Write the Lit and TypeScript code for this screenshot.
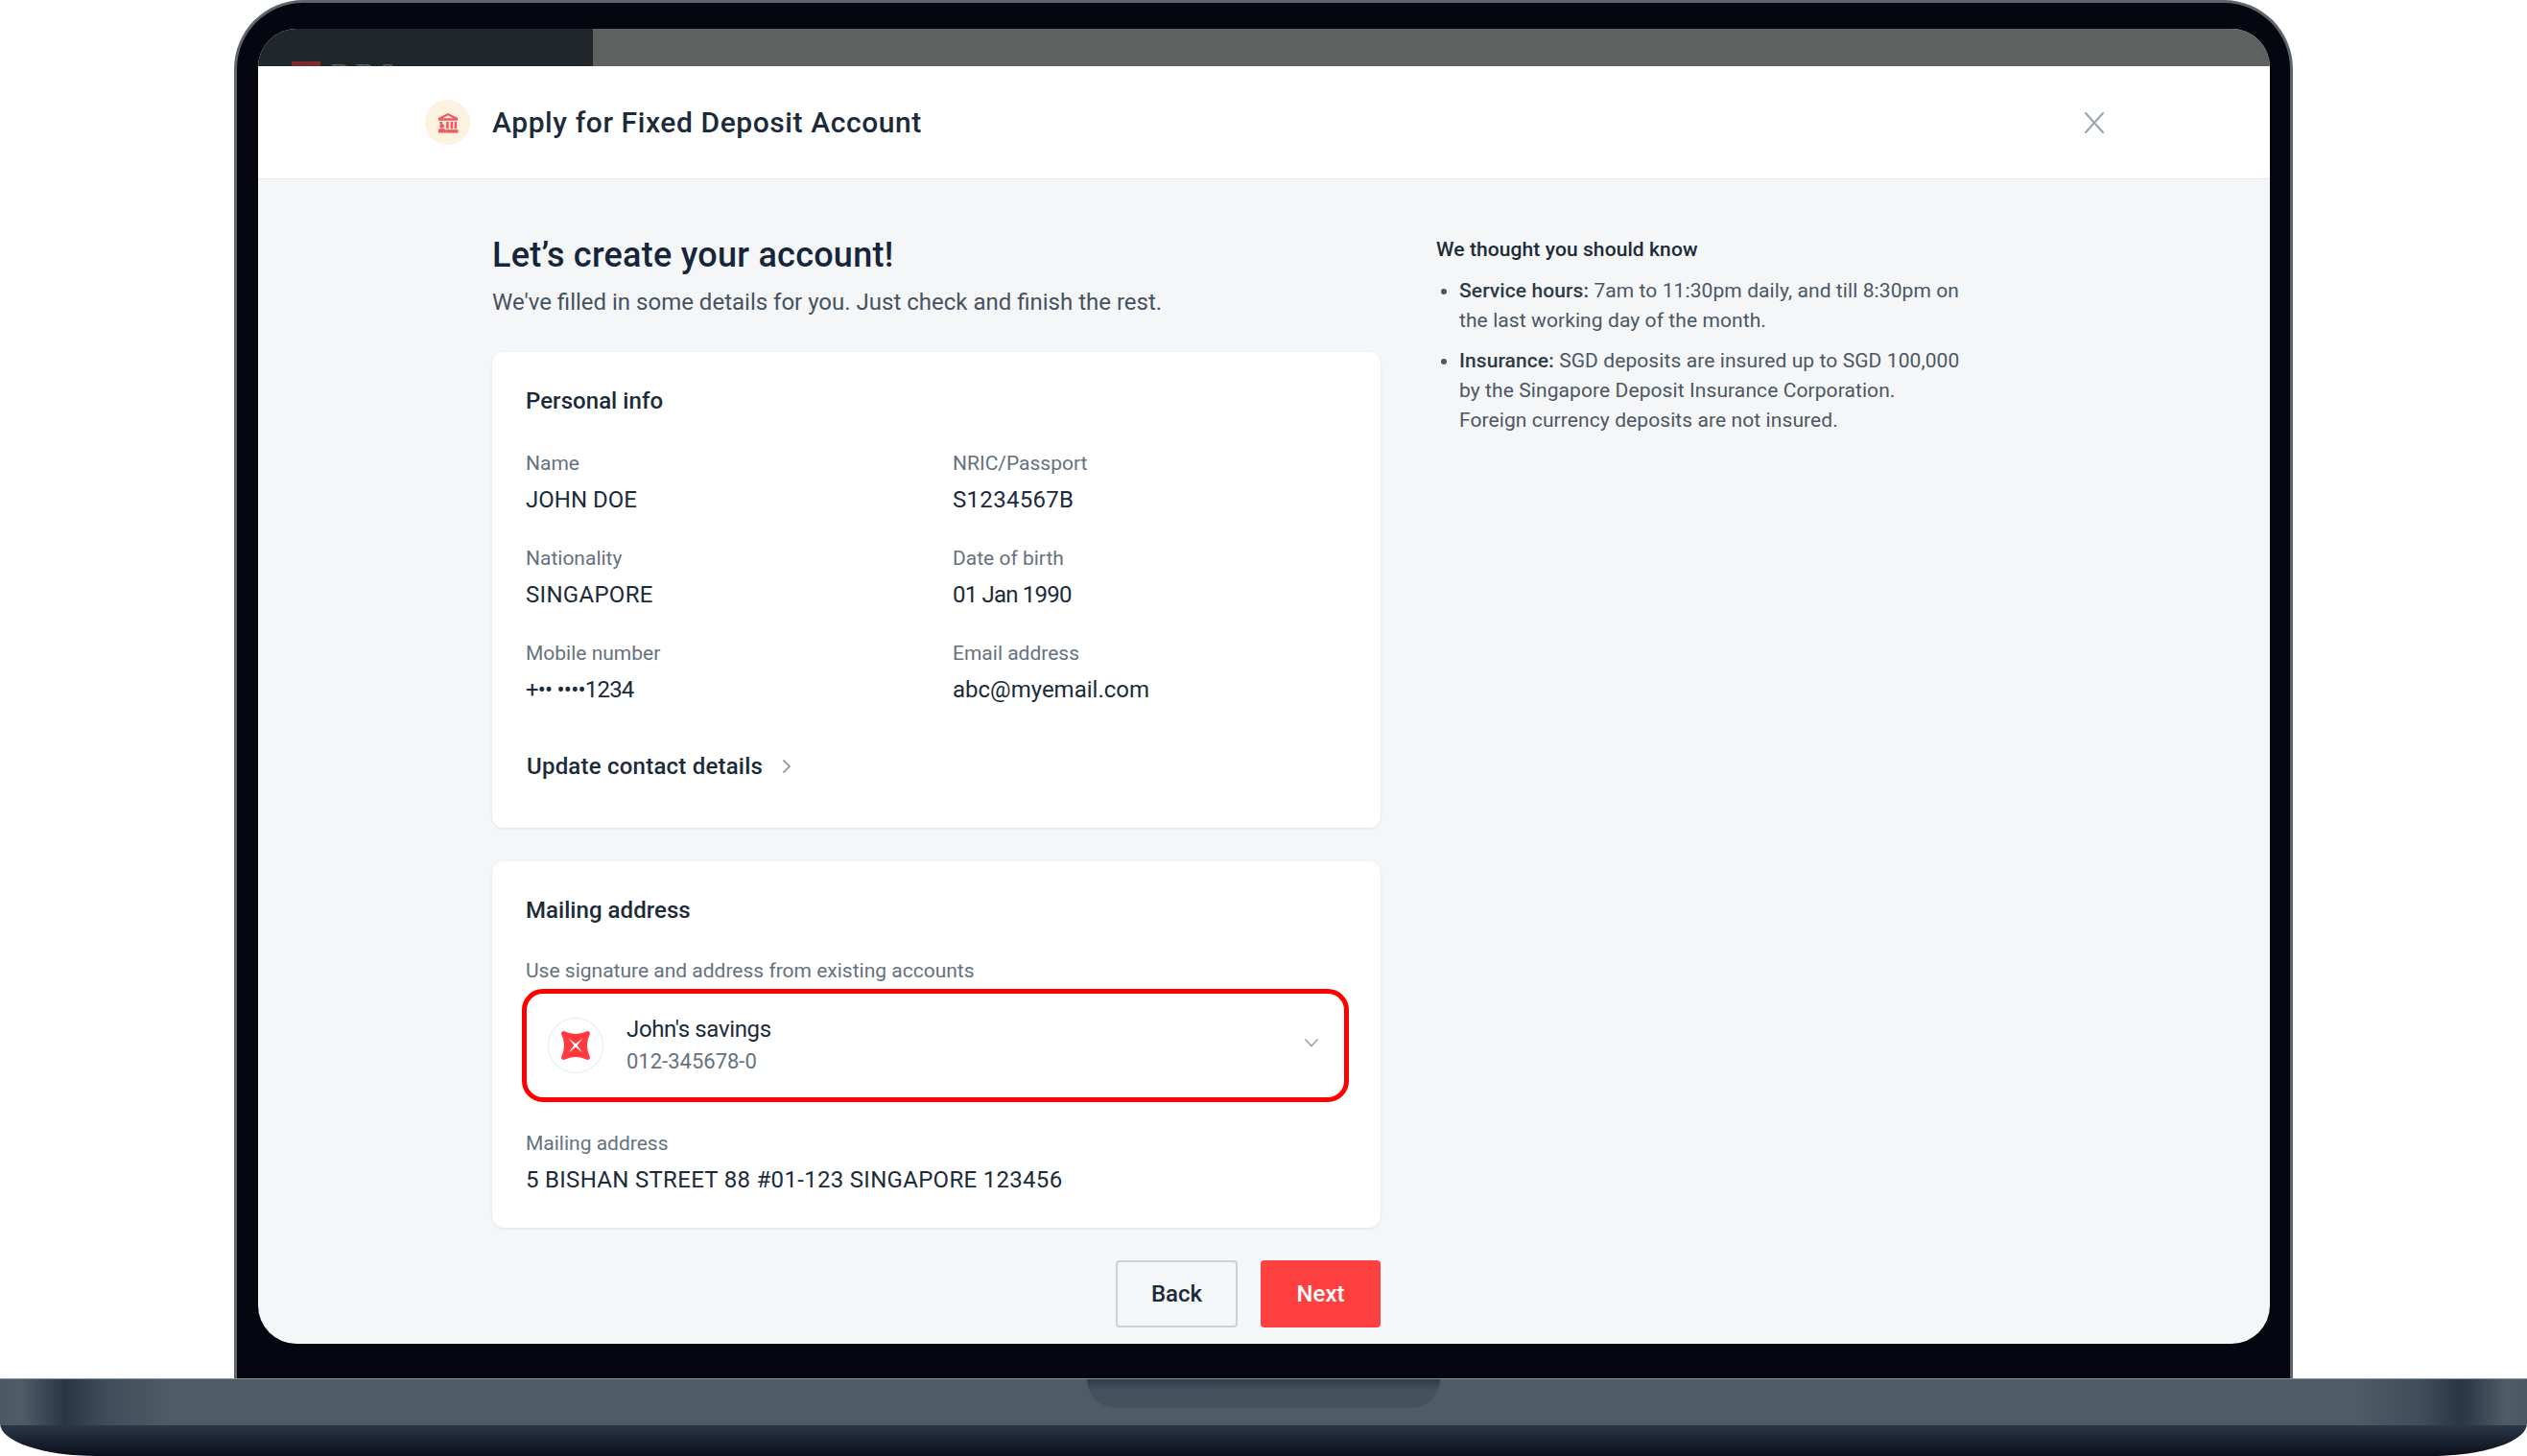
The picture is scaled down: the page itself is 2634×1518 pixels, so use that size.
import { LitElement, html, css } from "lit";
import { customElement } from "lit/decorators.js";

@customElement("app-root")
export class AppRoot extends LitElement {
  static styles = css`
    :host { display: block; width: 2634px; height: 1518px; overflow: hidden; background: #fff; font-family: Roboto, "Open Sans", sans-serif; color: #1c2b39; }
    * { box-sizing: border-box; }
    .lid { margin: 0 244px; height: 1437px; padding: 27px 21px 36px 22px; background: #05060f; border: 3px solid #5d666a; border-bottom: 0; border-radius: 72px 72px 0 0; }
    .screen { height: 1371px; display: flex; flex-direction: column; overflow: hidden; border-radius: 40px; background: #f5f6f8; }
    .strip { height: 39px; flex: none; display: flex; overflow: hidden; }
    .strip-left { width: 349px; background: #20262a; display: flex; gap: 10px; padding: 34px 0 0 35px; align-items: flex-start; }
    .strip-right { flex: 1; background: #5f6160; }
    .logo-red { width: 30px; height: 20px; background: #7d2a2e; flex: none; }
    .logo-text { font: 32px/1 "Liberation Serif", serif; color: #5a5f62; letter-spacing: 3px; margin-top: -3px; }
    .modal-head { height: 118px; flex: none; background: #fff; border-bottom: 1px solid #e5e7ea; display: flex; align-items: center; padding: 0 172px 0 174px; border-radius: 4px 4px 0 0; }
    .bank { width: 47px; height: 47px; border-radius: 50%; background: #fdf1e0; display: flex; align-items: center; justify-content: center; flex: none; }
    .title { font-size: 30px; font-weight: 500; letter-spacing: 0.58px; margin-left: 23px; flex: 1; color: #1c2b39; }
    .close { flex: none; display: block; }
    .body { flex: 1; display: flex; gap: 58px; padding: 57px 0 0 244px; }
    .left { width: 926px; flex: none; }
    h1 { margin: 0; font-size: 36px; line-height: 44px; font-weight: 500; letter-spacing: 0.25px; color: #16263a; }
    .sub { margin: 11px 0 36px; font-size: 24px; line-height: 32px; color: #45525f; }
    .card { background: #fff; border-radius: 12px; box-shadow: 0 1px 3px rgba(30, 40, 60, 0.1); padding: 36px 35px 34px; }
    .card + .card { margin-top: 35px; }
    .card-first { padding-bottom: 48px; }
    h2 { margin: 0; font-size: 24px; line-height: 30px; font-weight: 500; letter-spacing: 0.05px; color: #1c2b39; }
    .grid { display: grid; grid-template-columns: 445px 1fr; row-gap: 31px; margin-top: 36px; }
    .label { font-size: 21px; line-height: 28px; color: #66727e; }
    .value { font-size: 24px; line-height: 32px; margin-top: 8px; color: #1c2b39; }
    .caps { letter-spacing: 0.3px; }
    .date { letter-spacing: -0.8px; }
    .update { display: flex; align-items: center; gap: 20px; margin: 48px 0 0 1px; font-size: 24px; line-height: 32px; font-weight: 500; letter-spacing: 0.22px; color: #1c2b39; }
    .use { margin-top: 34px; }
    .select { margin: 5px 0 29px -4px; height: 118px; width: 862px; border: 5px solid #f00; border-radius: 22px; display: flex; align-items: center; padding: 0 26px 0 22px; }
    .circle { width: 58px; height: 58px; border: 1px solid #e6e9ec; border-radius: 50%; display: flex; align-items: center; justify-content: center; flex: none; }
    .acct { margin-left: 24px; flex: 1; }
    .acct-name { font-size: 24px; line-height: 34px; letter-spacing: -0.35px; color: #1c2b39; }
    .acct-no { font-size: 22px; line-height: 34px; color: #66727e; }
    .chev { margin-top: -6px; }
    .actions { display: flex; justify-content: flex-end; gap: 24px; margin-top: 34px; }
    .btn { height: 70px; border-radius: 4px; font: 500 24px Roboto, sans-serif; display: flex; align-items: center; justify-content: center; padding: 0; }
    .back { width: 127px; background: transparent; border: 2px solid #cad1d8; color: #1c2b39; }
    .next { width: 125px; background: #ff4040; border: 0; color: #fff; }
    .right { width: 560px; flex: none; margin-top: 1px; font-size: 21px; line-height: 31px; letter-spacing: 0.09px; color: #4b5763; }
    h3 { margin: 0 0 12px; font-size: 21px; line-height: 31px; font-weight: 500; color: #1c2b39; }
    ul { margin: 0; padding: 0 0 0 24px; }
    li { margin-bottom: 11px; }
    b { font-weight: 500; color: #2d3a47; }
    .base { height: 81px; background: linear-gradient(#0000 0 49px, #2b3748 49px, #0b0e19 81px); overflow: hidden; border-radius: 0 0 100px 100px / 0 0 34px 34px; }
    .deck { height: 49px; background: linear-gradient(90deg, #4b5863 0, #505c66 22px, #2a3546 68px, #3f4c59 110px, #4f5c67 180px, #4f5c67 2454px, #3f4c59 2524px, #2a3546 2566px, #505c66 2612px, #4b5863 100%); border-top: 1px solid #8a9196; display: flex; justify-content: center; }
    .notch { width: 368px; height: 30px; background: linear-gradient(#2f3a48, #44525e 40%); border-radius: 0 0 30px 30px; }
  `;

  private info(label: string, value: string, cls = "") {
    return html`<div><div class="label">${label}</div><div class="value ${cls}">${value}</div></div>`;
  }

  render() {
    return html`
      <div class="lid">
        <div class="screen">
          <div class="strip">
            <div class="strip-left"><div class="logo-red"></div><div class="logo-text">DBS</div></div>
            <div class="strip-right"></div>
          </div>
          <div class="modal-head">
            <div class="bank">
              <svg width="22" height="22" viewBox="0 0 24 24" fill="#ef5a60">
                <path d="M12 1 L23 6.5 V9.5 H1 V6.5 Z M12 3.6 L6 6.9 H18 Z" fill-rule="evenodd"/>
                <rect x="2.5" y="10.8" width="3" height="2.4"/>
                <rect x="10" y="10.8" width="2.8" height="8"/>
                <rect x="14.8" y="10.8" width="2.8" height="8"/>
                <rect x="19.2" y="10.8" width="2.8" height="8"/>
                <circle cx="5" cy="15.6" r="2.6"/>
                <path d="M1 23.5 V21 Q1 18.5 3.6 18.5 H6.4 Q9 18.5 9 21 V23.5 Z"/>
                <rect x="9" y="19.8" width="14.5" height="3.7"/>
              </svg>
            </div>
            <div class="title">Apply for Fixed Deposit Account</div>
            <svg class="close" width="22" height="22" viewBox="0 0 22 22" fill="none" stroke="#9aa3ab" stroke-width="2" stroke-linecap="round"><path d="M2 1 L20 21 M20 1 L2 21"/></svg>
          </div>
          <div class="body">
            <div class="left">
              <h1>Let’s create your account!</h1>
              <p class="sub">We've filled in some details for you. Just check and finish the rest.</p>
              <section class="card card-first">
                <h2>Personal info</h2>
                <div class="grid">
                  ${this.info("Name", "JOHN DOE")}
                  ${this.info("NRIC/Passport", "S1234567B", "caps")}
                  ${this.info("Nationality", "SINGAPORE", "caps")}
                  ${this.info("Date of birth", "01 Jan 1990", "date")}
                  ${this.info("Mobile number", "+•• ••••1234", "date")}
                  ${this.info("Email address", "abc@myemail.com")}
                </div>
                <div class="update">Update contact details
                  <svg width="10" height="16" viewBox="0 0 10 16" fill="none" stroke="#9aa3ab" stroke-width="2"><path d="M1.5 1.5 L8 8 L1.5 14.5"/></svg>
                </div>
              </section>
              <section class="card">
                <h2>Mailing address</h2>
                <div class="label use">Use signature and address from existing accounts</div>
                <div class="select">
                  <div class="circle">
                    <svg width="32" height="32" viewBox="0 0 30 30">
                      <path fill="#ff3b40" d="M3.5 1 Q15 6.5 26.5 1 Q29 1 29 3.5 Q23.5 15 29 26.5 Q29 29 26.5 29 Q15 23.5 3.5 29 Q1 29 1 26.5 Q6.5 15 1 3.5 Q1 1 3.5 1 Z"/>
                      <path fill="#fff" d="M8.5 8.5 L15 13.4 L21.5 8.5 L16.6 15 L21.5 21.5 L15 16.6 L8.5 21.5 L13.4 15 Z"/>
                    </svg>
                  </div>
                  <div class="acct">
                    <div class="acct-name">John's savings</div>
                    <div class="acct-no">012-345678-0</div>
                  </div>
                  <svg class="chev" width="16" height="10" viewBox="0 0 16 10" fill="none" stroke="#9aa3ab" stroke-width="1.6"><path d="M1.5 1.5 L8 8.5 L14.5 1.5"/></svg>
                </div>
                <div class="label">Mailing address</div>
                <div class="value caps">5 BISHAN STREET 88 #01-123 SINGAPORE 123456</div>
              </section>
              <div class="actions">
                <button class="btn back">Back</button>
                <button class="btn next">Next</button>
              </div>
            </div>
            <aside class="right">
              <h3>We thought you should know</h3>
              <ul>
                <li><b>Service hours:</b> 7am to 11:30pm daily, and till 8:30pm on<br />the last working day of the month.</li>
                <li><b>Insurance:</b> SGD deposits are insured up to SGD 100,000<br />by the Singapore Deposit Insurance Corporation.<br />Foreign currency deposits are not insured.</li>
              </ul>
            </aside>
          </div>
        </div>
      </div>
      <div class="base"><div class="deck"><div class="notch"></div></div></div>
    `;
  }
}
